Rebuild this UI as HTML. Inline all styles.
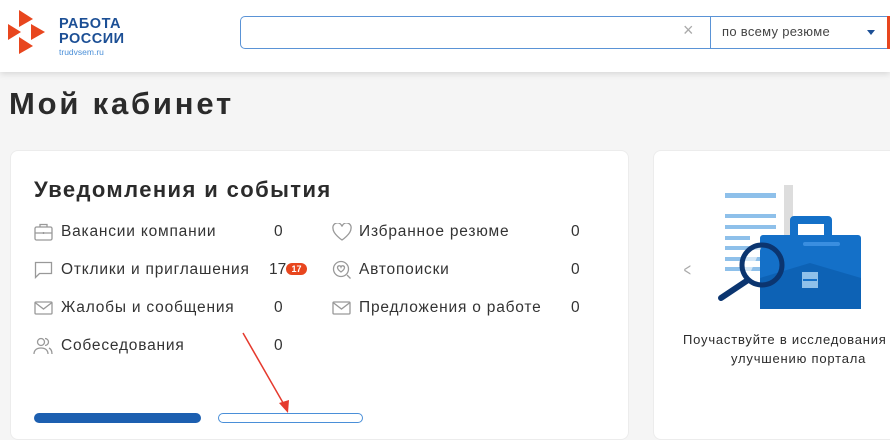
<!DOCTYPE html>
<html><head><meta charset="utf-8"><style>
*{margin:0;padding:0;box-sizing:border-box}
body{width:890px;height:416px;overflow:hidden;background:#f5f5f5;font-family:"Liberation Sans",sans-serif;color:#2b2b2b;position:relative}
.hdr{position:absolute;left:0;top:0;width:890px;height:72px;background:#fff;box-shadow:0 2px 6px rgba(0,0,0,.12)}
.abs{position:absolute}
.card{position:absolute;background:#fff;border-radius:8px;border:1px solid #ececec}
.row{position:absolute;font-size:15.5px;color:#333;white-space:nowrap;letter-spacing:.8px}
.cnt{position:absolute;font-size:15.5px;color:#333}
svg.ic{position:absolute}
</style></head><body>
<div class="hdr">
 <svg class="abs" style="left:7px;top:10px" width="45" height="45" viewBox="0 0 45 45">
  <polygon points="12,0 26,9 12,17" fill="#e8461e"/>
  <polygon points="1,14 14,22 1,30" fill="#e8461e"/>
  <polygon points="24,14 38,22 24,30" fill="#e8461e"/>
  <polygon points="12,27 26,36 12,44" fill="#e8461e"/>
 </svg>
 <div class="abs" style="left:59px;top:17px;font-weight:bold;font-size:14.5px;line-height:15px;color:#1c4f95;letter-spacing:.5px">РАБОТА<br>РОССИИ</div>
 <div class="abs" style="left:59px;top:47px;font-size:8.5px;color:#4a8fd8">trudvsem.ru</div>
 <div class="abs" style="left:240px;top:16px;width:652px;height:33px;border:1px solid #5a93d6;border-radius:5px;border-right:none"></div>
 <div class="abs" style="left:710px;top:16px;width:1px;height:33px;background:#5a93d6"></div>
 <div class="abs" style="left:683px;top:20px;font-size:18px;color:#aaa">×</div>
 <div class="abs" style="left:722px;top:24px;font-size:13px;color:#444;letter-spacing:.3px">по всему резюме</div>
 <div class="abs" style="left:867px;top:30px;width:0;height:0;border-left:4px solid transparent;border-right:4px solid transparent;border-top:5px solid #1c4f95"></div>
 <div class="abs" style="left:887px;top:16px;width:3px;height:33px;background:#e8461e"></div>
</div>
<div class="abs" style="left:9px;top:86px;font-size:31px;font-weight:bold;color:#2b2b2b;letter-spacing:2.8px">Мой кабинет</div>
<div class="card" style="left:10px;top:150px;width:619px;height:290px"></div>
<div class="abs" style="left:34px;top:177px;font-size:22px;font-weight:bold;color:#2b2b2b;letter-spacing:1.4px">Уведомления и события</div>

<svg class="ic" style="left:34px;top:223px" width="19" height="18" viewBox="0 0 19 18" fill="none" stroke="#999" stroke-width="1.3"><rect x="1" y="4" width="17" height="13" rx="1.5"/><path d="M6 4V1.5h7V4M1 10h17M9.5 9v2"/></svg>
<div class="row" style="left:61px;top:223px">Вакансии компании</div><div class="cnt" style="left:274px;top:223px">0</div>
<svg class="ic" style="left:34px;top:261px" width="19" height="18" viewBox="0 0 19 18" fill="none" stroke="#999" stroke-width="1.3"><path d="M1.5 1.5h16v11h-12l-4 4z"/></svg>
<div class="row" style="left:61px;top:261px">Отклики и приглашения</div><div class="cnt" style="left:269px;top:261px">17</div>
<div class="abs" style="left:286px;top:263px;width:21px;height:12px;border-radius:6px;background:#e8461e;color:#fff;font-size:9px;font-weight:bold;text-align:center;line-height:12px">17</div>
<svg class="ic" style="left:34px;top:299px" width="19" height="18" viewBox="0 0 19 18" fill="none" stroke="#999" stroke-width="1.3"><rect x="1" y="3" width="17" height="12" rx="1"/><path d="M1 3.5l8.5 6.5 8.5-6.5"/></svg>
<div class="row" style="left:61px;top:299px">Жалобы и сообщения</div><div class="cnt" style="left:274px;top:299px">0</div>
<svg class="ic" style="left:33px;top:336px" width="20" height="19" viewBox="0 0 20 19" fill="none" stroke="#999" stroke-width="1.3"><circle cx="8" cy="6" r="3.5"/><path d="M1 18c0-4 3-6 7-6s7 2 7 6M12 2.5a3.5 3.5 0 010 7M16 12c2 1 3 3 3 6"/></svg>
<div class="row" style="left:61px;top:337px">Собеседования</div><div class="cnt" style="left:274px;top:337px">0</div>

<svg class="ic" style="left:332px;top:223px" width="20" height="18" viewBox="0 0 20 18" fill="none" stroke="#999" stroke-width="1.3"><path d="M10 17S1 11 1 5.5A4.5 4.5 0 0110 3.5 4.5 4.5 0 0119 5.5C19 11 10 17 10 17z"/></svg>
<div class="row" style="left:359px;top:223px">Избранное резюме</div><div class="cnt" style="left:571px;top:223px">0</div>
<svg class="ic" style="left:332px;top:260px" width="20" height="20" viewBox="0 0 20 20" fill="none" stroke="#999" stroke-width="1.3"><circle cx="9" cy="9" r="7.5"/><path d="M15 15l3.5 3.5M9 12S5.5 9.5 5.5 7.5a1.8 1.8 0 013.5-.5 1.8 1.8 0 013.5.5C12.5 9.5 9 12 9 12z"/></svg>
<div class="row" style="left:359px;top:261px">Автопоиски</div><div class="cnt" style="left:571px;top:261px">0</div>
<svg class="ic" style="left:332px;top:299px" width="19" height="18" viewBox="0 0 19 18" fill="none" stroke="#999" stroke-width="1.3"><rect x="1" y="3" width="17" height="12" rx="1"/><path d="M1 3.5l8.5 6.5 8.5-6.5"/></svg>
<div class="row" style="left:359px;top:299px">Предложения о работе</div><div class="cnt" style="left:571px;top:299px">0</div>

<div class="abs" style="left:34px;top:413px;width:167px;height:10px;border-radius:6px;background:#1c5fb0"></div>
<div class="abs" style="left:218px;top:413px;width:145px;height:10px;border-radius:6px;border:1px solid #4a8fd8"></div>
<svg class="abs" style="left:230px;top:325px" width="70" height="91" viewBox="0 0 70 91"><path d="M13 8L56 83" stroke="#e53a2e" stroke-width="1.5"/><polygon points="58,88 49,78 59,75" fill="#e53a2e"/></svg>

<div class="card" style="left:653px;top:150px;width:250px;height:290px"></div>
<div class="abs" style="left:682px;top:260px;font-size:18px;color:#aaa;transform:scaleX(.7)">&lt;</div>
<svg class="abs" style="left:700px;top:180px" width="190" height="135" viewBox="700 180 190 135">
 <rect x="720" y="186" width="64" height="100" fill="#fff"/>
 <rect x="784" y="185" width="9" height="100" fill="#ddd"/>
 <g fill="#8ec0ea"><rect x="725" y="193" width="51" height="5"/><rect x="725" y="214" width="51" height="4"/><rect x="725" y="225" width="51" height="4"/><rect x="725" y="236" width="25" height="4"/><rect x="725" y="246" width="51" height="4"/><rect x="725" y="257" width="51" height="4"/><rect x="725" y="267" width="51" height="4"/></g>
 <path d="M790 236V220a4 4 0 014-4h34a4 4 0 014 4v16h-8v-12h-26v12z" fill="#1470c8"/>
 <rect x="760" y="235" width="101" height="74" rx="3" fill="#1470c8"/>
 <path d="M760 278l50-15 51 15v31H760z" fill="#0d62b5"/>
 <rect x="803" y="242" width="37" height="4" rx="2" fill="#3a8ee0"/>
 <rect x="802" y="272" width="16" height="16" fill="#8ec0ea"/><rect x="803" y="279" width="14" height="2" fill="#1470c8"/>
 <path d="M762 246a19 19 0 00-14 32z" fill="#fff" opacity=".6"/>
 <circle cx="762" cy="265" r="20" fill="none" stroke="#0b3570" stroke-width="5"/>
 <path d="M748 280L721 298" stroke="#0b3570" stroke-width="6" stroke-linecap="round"/>
</svg>
<div class="abs" style="left:683px;top:332px;font-size:13px;color:#2b2b2b;white-space:nowrap;letter-spacing:.8px">Поучаствуйте в исследования</div>
<div class="abs" style="left:731px;top:351px;font-size:13px;color:#2b2b2b;white-space:nowrap;letter-spacing:.8px">улучшению портала</div>
</body></html>
